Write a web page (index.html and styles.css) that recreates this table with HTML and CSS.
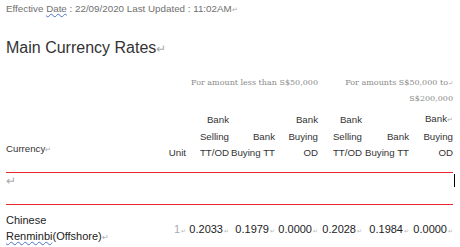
FILE: index.html
```html
<!DOCTYPE html>
<html>
<head>
<meta charset="utf-8">
<link rel="stylesheet" href="styles.css">
</head>
<body>
<div class="page">
  <div class="meta">Effective <span class="spell">Date</span> : 22/09/2020 Last Updated : 11:02AM<span class="pm">↵</span></div>
  <h1 class="title">Main Currency Rates<span class="pm">↵</span></h1>
  <table class="rates">
    <colgroup>
      <col class="c-cur"><col class="c-unit"><col class="c-a"><col class="c-b"><col class="c-c"><col class="c-d"><col class="c-e"><col class="c-f">
    </colgroup>
    <tr class="group">
      <td colspan="2"></td>
      <td colspan="3">For amount less than S$50,000</td>
      <td colspan="3">For amounts S$50,000 to<span class="pm">↵</span><br>S$200,000</td>
    </tr>
    <tr class="head">
      <th class="cur">Currency<span class="pm">↵</span></th>
      <th>Unit</th>
      <th>Bank<br>Selling<br>TT/OD</th>
      <th>Bank<br>Buying TT</th>
      <th>Bank<br>Buying<br>OD</th>
      <th>Bank<br>Selling<br>TT/OD</th>
      <th>Bank<br>Buying TT</th>
      <th>Bank<span class="pm">↵</span><br>Buying<br>OD</th>
    </tr>
    <tr class="empty">
      <td colspan="8"><span class="pm">↵</span><span class="caret"></span></td>
    </tr>
    <tr class="data">
      <td class="cur">Chinese<br><span class="spell">Renminbi</span>(Offshore)<span class="pm">↵</span></td>
      <td class="unit">1<span class="cm">↵</span></td>
      <td>0.2033<span class="cm">↵</span></td>
      <td>0.1979<span class="cm">↵</span></td>
      <td>0.0000<span class="cm">↵</span></td>
      <td>0.2028<span class="cm">↵</span></td>
      <td>0.1984<span class="cm">↵</span></td>
      <td>0.0000<span class="cm">↵</span></td>
    </tr>
  </table>
</div>
</body>
</html>
```
FILE: styles.css
```css
html, body {
  margin: 0;
  padding: 0;
  background: #ffffff;
}
.page {
  padding: 3px 0 0 6px;
  font-family: "Liberation Sans", Arial, sans-serif;
  color: #333333;
}
.meta {
  font-size: 9.8px;
  line-height: 12px;
  color: #707070;
}
.spell {
  text-decoration: underline wavy #4a72c8;
  text-decoration-thickness: 1px;
  text-underline-offset: 1px;
}
.pm {
  color: #aaaaaa;
  font-size: 0.75em;
}
.cm {
  color: #b8b8b8;
  font-size: 6px;
  margin-left: 1px;
}
.title {
  margin: 21px 0 0 0;
  font-size: 16px;
  line-height: 22px;
  font-weight: normal;
  color: #333333;
}
.rates {
  margin-top: 15px;
  border-collapse: collapse;
  table-layout: fixed;
  width: 447px;
}
.c-cur { width: 154px; }
.c-unit { width: 26px; }
.c-a { width: 43px; }
.c-b { width: 46px; }
.c-c { width: 43px; }
.c-d { width: 44px; }
.c-e { width: 47px; }
.c-f { width: 44px; }
.rates td, .rates th {
  padding: 0;
  text-align: right;
  font-weight: normal;
}
.group td {
  font-family: "DejaVu Serif", "Liberation Serif", serif;
  font-size: 8px;
  line-height: 16px;
  color: #8a8a8a;
  vertical-align: top;
  padding-bottom: 4px;
}
.head th {
  font-size: 9.7px;
  line-height: 16.5px;
  color: #333333;
  vertical-align: bottom;
  padding-bottom: 10px;
}
.head th.cur {
  text-align: left;
  padding-bottom: 13px;
}
.empty td {
  border-top: 1px solid #e8282c;
  border-bottom: 1px solid #e8282c;
  height: 31px;
  vertical-align: top;
  text-align: left;
  line-height: 14px;
  position: relative;
}
.caret {
  position: absolute;
  right: -2px;
  top: 1px;
  width: 1px;
  height: 13px;
  background: #000000;
}
.data td {
  font-size: 11px;
  color: #222222;
  vertical-align: middle;
  padding-top: 7px;
}
.data td.cur {
  text-align: left;
  line-height: 16.5px;
}
.data td.unit {
  color: #aaaaaa;
}
```
